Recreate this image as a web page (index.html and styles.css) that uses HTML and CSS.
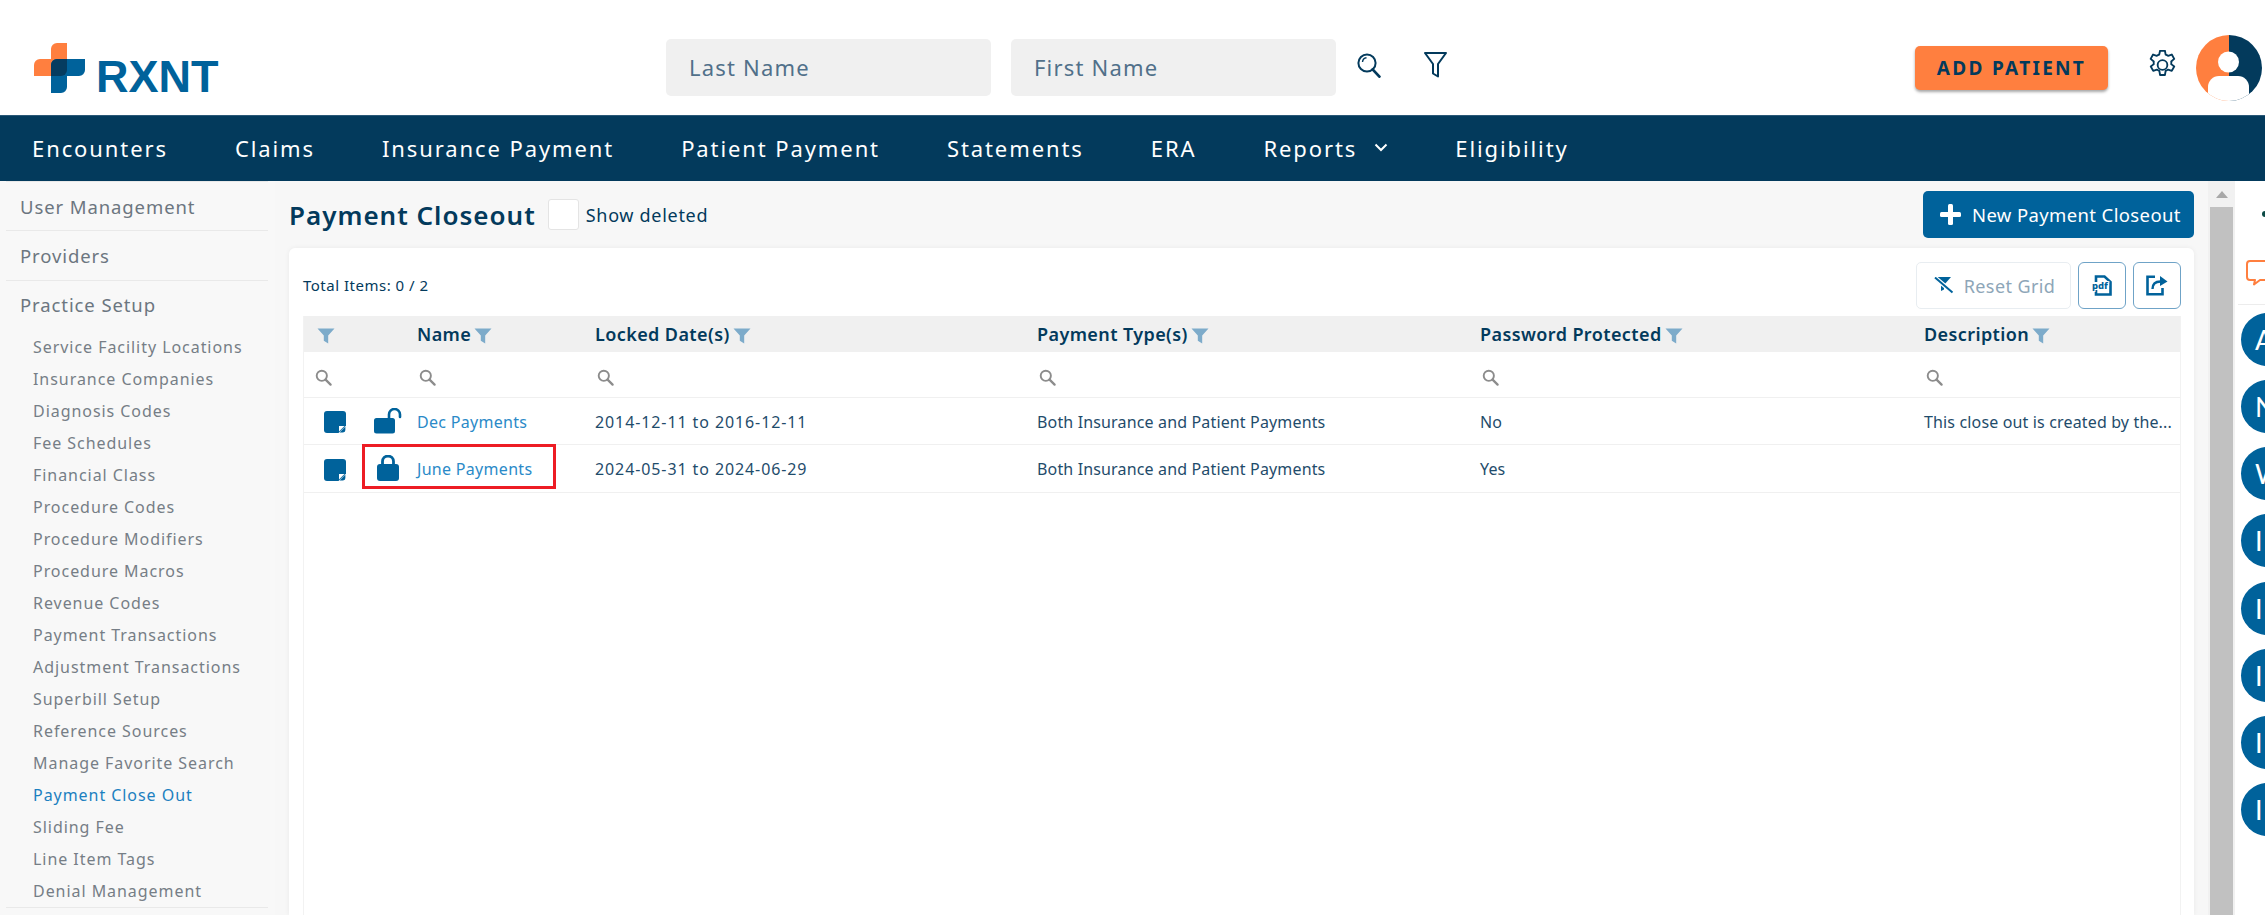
FILE: index.html
```html
<!DOCTYPE html>
<html lang="en">
<head>
<meta charset="utf-8">
<title>Payment Closeout</title>
<link rel="stylesheet" href="styles.css">
</head>
<body>
<svg class="defs" width="0" height="0" aria-hidden="true">
  <symbol id="funnel" viewBox="0 0 18 16"><path d="M0.5 0.5h17L11.2 7.6V15.5L6.8 12.8V7.6z"/></symbol>
  <symbol id="mag" viewBox="0 0 18 18"><circle cx="7.2" cy="7.2" r="5.4" fill="none" stroke="currentColor" stroke-width="2"/><path d="M11.2 11.2L16.5 16.5" stroke="currentColor" stroke-width="2.4" stroke-linecap="round"/></symbol>
  <symbol id="note" viewBox="0 0 22 22"><path d="M3 0h16a3 3 0 0 1 3 3v11.5L14.5 22H3a3 3 0 0 1-3-3V3a3 3 0 0 1 3-3z"/><path d="M15 20.5V15h5.5z" fill="#fff" stroke="none"/><path d="M15.6 21.4l5.8-5.8v3.4a2.4 2.4 0 0 1-2.4 2.4z"/></symbol>
</svg>
<header class="topbar">
  <a class="logo">
    <svg class="logo-mark" width="51" height="50" viewBox="0 0 51 50">
      <path d="M17 16V6a6 6 0 0 1 6-6H33V33H0V22a6 6 0 0 1 6-6z" fill="#ff7f3f"/>
      <path d="M23 16H51V27a6 6 0 0 1-6 6H33V44a6 6 0 0 1-6 6H17V22a6 6 0 0 1 6-6z" fill="#00629b"/>
      <path d="M23 16H33V27a6 6 0 0 1-6 6H17V22a6 6 0 0 1 6-6z" fill="#053c60"/>
    </svg>
    <span class="logo-text">RXNT</span>
  </a>
  <div class="search">
    <div class="field">Last Name</div>
    <div class="field">First Name</div>
    <svg class="search-ico" width="24" height="25" viewBox="0 0 24 25" fill="none" stroke="#033a5c"><circle cx="10" cy="10" r="8.6" stroke-width="2"/><path d="M5.5 9a4.6 4.6 0 0 1 4-4.2" stroke-width="1.4"/><path d="M15.6 16.4L22.4 23.6" stroke-width="2.8" stroke-linecap="round"/></svg>
    <svg class="filter-ico" width="23" height="26" viewBox="0 0 23 26" fill="none" stroke="#033a5c" stroke-width="2" stroke-linejoin="round"><path d="M1 1h21l-8 11v12.5l-5-3V12z"/></svg>
  </div>
  <button class="add-btn">ADD PATIENT</button>
  <svg class="gear" width="27" height="30" viewBox="3 1.5 18 21" fill="none" stroke="#033a5c" stroke-width="1.3" stroke-linejoin="round"><circle cx="12" cy="12" r="3.4"/><path d="M10.3 2h3.4l.5 2.7c.6.2 1.2.5 1.7.9l2.6-.9 1.7 3-2.1 1.8c.1.6.1 1.2 0 1.9l2.1 1.7-1.7 3-2.6-.9c-.5.4-1.1.7-1.7.9l-.5 2.9h-3.4l-.5-2.9c-.6-.2-1.2-.5-1.7-.9l-2.6.9-1.7-3 2.1-1.7c-.1-.7-.1-1.3 0-1.9L3.7 7.7l1.7-3 2.6.9c.5-.4 1.1-.7 1.7-.9z"/></svg>
  <svg class="avatar" width="66" height="66" viewBox="0 0 66 66">
    <defs><clipPath id="av"><circle cx="33" cy="33" r="33"/></clipPath></defs>
    <g clip-path="url(#av)">
      <rect width="33" height="66" fill="#ff7f3f"/>
      <rect x="33" width="33" height="66" fill="#033a5c"/>
      <circle cx="32.500" cy="27" r="10.500" fill="#fff"/>
      <path d="M12 66V52a11 11 0 0 1 11-11h19a11 11 0 0 1 11 11v14z" fill="#fff"/>
    </g>
  </svg>
</header>
<nav class="navbar">
  <a>Encounters</a><a>Claims</a><a>Insurance Payment</a><a>Patient Payment</a><a>Statements</a><a>ERA</a>
  <a class="has-caret">Reports<svg width="14" height="9" viewBox="0 0 14 9" fill="none" stroke="#fff" stroke-width="2"><path d="M1.5 1.5L7 7l5.5-5.5"/></svg></a>
  <a>Eligibility</a>
</nav>
<div class="body">
  <aside class="sidebar">
    <div class="side-head">User Management</div>
    <div class="side-head">Providers</div>
    <div class="side-group">
      <div class="side-title">Practice Setup</div>
      <a>Service Facility Locations</a>
      <a>Insurance Companies</a>
      <a>Diagnosis Codes</a>
      <a>Fee Schedules</a>
      <a>Financial Class</a>
      <a>Procedure Codes</a>
      <a>Procedure Modifiers</a>
      <a>Procedure Macros</a>
      <a>Revenue Codes</a>
      <a>Payment Transactions</a>
      <a>Adjustment Transactions</a>
      <a>Superbill Setup</a>
      <a>Reference Sources</a>
      <a>Manage Favorite Search</a>
      <a class="active">Payment Close Out</a>
      <a>Sliding Fee</a>
      <a>Line Item Tags</a>
      <a>Denial Management</a>
    </div>
  </aside>
  <main class="main">
    <div class="title-row">
      <h1>Payment Closeout</h1>
      <span class="check"></span>
      <span class="check-label">Show deleted</span>
      <button class="new-btn"><svg width="21" height="21" viewBox="0 0 21 21" fill="#fff"><rect x="8" y="0" width="5" height="21" rx="1.5"/><rect x="0" y="8" width="21" height="5" rx="1.5"/></svg>New Payment Closeout</button>
    </div>
    <section class="card">
      <div class="tools">
        <span class="total">Total Items: 0 / 2</span>
        <button class="reset"><svg width="22" height="17" viewBox="0 0 22 17"><path d="M0 0H19L12 8V12.500L9 14V8Z" fill="#00629b"/><path d="M1 -1L23 17.500" stroke="#fff" stroke-width="4.500" fill="none"/><path d="M3 0.500L20.500 15.500" stroke="#00629b" stroke-width="2" fill="none"/></svg>Reset Grid</button>
        <button class="icon-btn"><svg width="20" height="21" viewBox="0 0 20 21"><path d="M4 7V1.500H12.500L18.500 7V19.500H4V15" fill="none" stroke="#00629b" stroke-width="2.600"/><text x="0" y="13.500" class="pdf-text">pdf</text></svg></button>
        <button class="icon-btn"><svg width="22" height="21" viewBox="0 0 22 21" fill="none" stroke="#00629b" stroke-width="2.600"><path d="M9 1.800H1.500V19.200H16.500V13"/><path d="M6.500 14c0-5 2.500-7.500 8-7.500" stroke-width="2.400"/><path d="M14 1l7.500 5.500L14 11z" fill="#00629b" stroke="none"/></svg></button>
      </div>
      <div class="grid-wrap">
        <table class="grid">
          <thead>
            <tr class="head-row">
              <th class="c-a"><svg class="fn"><use href="#funnel"/></svg></th>
              <th class="c-b"></th>
              <th class="c-name">Name<svg class="fn"><use href="#funnel"/></svg></th>
              <th class="c-date">Locked Date(s)<svg class="fn"><use href="#funnel"/></svg></th>
              <th class="c-type">Payment Type(s)<svg class="fn"><use href="#funnel"/></svg></th>
              <th class="c-pw">Password Protected<svg class="fn"><use href="#funnel"/></svg></th>
              <th class="c-desc">Description<svg class="fn"><use href="#funnel"/></svg></th>
            </tr>
            <tr class="filter-row">
              <td><svg class="mg"><use href="#mag"/></svg></td>
              <td></td>
              <td><svg class="mg"><use href="#mag"/></svg></td>
              <td><svg class="mg"><use href="#mag"/></svg></td>
              <td><svg class="mg"><use href="#mag"/></svg></td>
              <td><svg class="mg"><use href="#mag"/></svg></td>
              <td><svg class="mg"><use href="#mag"/></svg></td>
            </tr>
          </thead>
          <tbody>
            <tr class="row">
              <td class="ic-a"><svg class="nt"><use href="#note"/></svg></td>
              <td class="ic-b"><svg width="29" height="26" viewBox="0 0 29 26"><path d="M2.500 10h16a2.500 2.500 0 0 1 2.500 2.500V23a2.500 2.500 0 0 1-2.500 2.500h-16A2.500 2.500 0 0 1 0 23V12.500A2.500 2.500 0 0 1 2.500 10z" fill="#00629b"/><path d="M15 11V6.500a5.500 5.500 0 0 1 11 0V9" fill="none" stroke="#00629b" stroke-width="2.600" stroke-linecap="round"/></svg></td>
              <td><a class="lnk">Dec Payments</a></td>
              <td class="date">2014-12-11 to 2016-12-11</td>
              <td>Both Insurance and Patient Payments</td>
              <td>No</td>
              <td class="desc">This close out is created by the...</td>
            </tr>
            <tr class="row">
              <td class="ic-a"><svg class="nt"><use href="#note"/></svg></td>
              <td class="ic-b"><svg class="lock" width="22" height="26" viewBox="0 0 22 26"><rect y="9" width="22" height="17" rx="3" fill="#00629b"/><path d="M5.500 11V6.500a5.500 5.500 0 0 1 11 0V11" fill="none" stroke="#00629b" stroke-width="2.800"/></svg></td>
              <td><a class="lnk">June Payments</a></td>
              <td class="date">2024-05-31 to 2024-06-29</td>
              <td>Both Insurance and Patient Payments</td>
              <td>Yes</td>
              <td></td>
            </tr>
          </tbody>
        </table>
        <div class="mark"></div>
      </div>
    </section>
  </main>
  <div class="scrollbar"><span class="arrow"></span><span class="thumb"></span></div>
  <aside class="rail">
    <div class="rail-top"><span class="rail-dot"></span></div>
    <svg class="chat" width="30" height="28" viewBox="0 0 30 28" fill="none" stroke="#ff7f3f" stroke-width="2"><path d="M4 1h26v19H14l-6 4.500 1-4.500H4a3 3 0 0 1-3-3V4a3 3 0 0 1 3-3z" stroke-linejoin="round"/></svg>
    <div class="rail-rule"></div>
    <div class="bubbles">
      <span>A</span><span>N</span><span>W</span><span>I</span><span>I</span><span>I</span><span>I</span><span>I</span>
    </div>
  </aside>
</div>
</body>
</html>
```
FILE: styles.css
```css
* { box-sizing: border-box; }
html, body { margin: 0; height: 915px; overflow: hidden; }
body { font-family: "Noto Sans", "Lato", sans-serif; color: #033a5c; background: #fff; display: flex; flex-direction: column; }
.defs { display: block; height: 0; }
button { font-family: inherit; border: 0; cursor: pointer; }

.topbar { height: 115px; flex: none; display: flex; align-items: center; padding-top: 20px; }
.logo { display: flex; align-items: flex-end; margin-left: 34px; width: 632px; height: 50px; }
.logo-mark { flex: none; }
.logo-text { font-family: "Liberation Sans", sans-serif; font-weight: 700; font-size: 45px; line-height: 33px; color: #00629b; margin-left: 11px; }
.search { display: flex; align-items: center; gap: 20px; }
.field { width: 325px; height: 57px; background: #f0f0f0; border-radius: 5px; padding-left: 23px; font-size: 22px; line-height: 57px; letter-spacing: 1.200px; color: #51708a; }
.search-ico { margin-top: -5px; margin-left: 1px; }
.filter-ico { margin-left: 23px; margin-top: -5px; }
.add-btn { margin-left: auto; width: 193px; height: 44px; background: #ff7f3f; color: #033a5c; font-weight: 700; font-size: 19px; letter-spacing: 2.300px; border-radius: 5px; box-shadow: 0 2px 3px rgba(0,0,0,.35); padding: 0; }
.gear { margin-left: 41px; margin-top: -5px; }
.avatar { margin-left: 20px; margin-right: 3px; }

.navbar { height: 66px; flex: none; background: #033a5c; display: flex; align-items: center; gap: 67px; padding: 0 0 2px 32px; border-top: 1px solid #2a5877; }
.navbar a { color: #fff; font-size: 22px; letter-spacing: 1.900px; }
.has-caret { display: flex; align-items: center; gap: 17px; }

.body { flex: 1; min-height: 0; display: flex; background: #f7f7f7; }
.sidebar { width: 275px; flex: none; padding: 0 7px 0 6px; background: #f8f8f8; }
.side-head, .side-title { font-size: 18.500px; letter-spacing: .9px; color: #6c7680; padding-left: 14px; }
.side-head { height: 50px; line-height: 50px; border-bottom: 1px solid #e9e9e9; }
.side-head:first-child { border-top: 1px solid #e9e9e9; }
.side-group { border-bottom: 1px solid #e9e9e9; height: 627px; }
.side-title { height: 50px; line-height: 48px; }
.side-group a { display: block; height: 32px; line-height: 32px; padding-left: 27px; font-size: 16px; letter-spacing: .95px; color: #767e86; }
.side-group a.active { color: #1c80c0; }

.main { flex: 1; min-width: 0; padding: 10px 14px 0; display: flex; flex-direction: column; }
.title-row { display: flex; align-items: center; height: 47px; flex: none; }
h1 { margin: 0; font-size: 26px; font-weight: 600; letter-spacing: 1px; color: #033a5c; }
.check { width: 31px; height: 31px; background: #fff; border: 1px solid #e4e4e4; border-radius: 3px; margin-left: 12px; }
.check-label { font-size: 18px; letter-spacing: .7px; margin-left: 7px; }
.new-btn { margin-left: auto; width: 271px; height: 47px; background: #00629b; color: #fff; border-radius: 5px; font-size: 18.500px; letter-spacing: .37px; display: flex; align-items: center; gap: 11px; padding-left: 17px; }

.card { flex: 1; margin-top: 10px; background: #fff; border-radius: 6px 6px 0 0; box-shadow: 0 0 5px rgba(0,0,0,.06); padding: 14px 13px 0 14px; display: flex; flex-direction: column; min-width: 0; }
.tools { display: flex; align-items: center; height: 47px; gap: 7px; flex: none; }
.total { font-size: 15px; letter-spacing: .5px; margin-right: auto; margin-top: -1px; }
.reset { width: 155px; height: 47px; background: #fff; border: 1px solid #e8edf1; border-radius: 5px; color: #8ea6b8; font-size: 18px; letter-spacing: .4px; display: flex; align-items: center; justify-content: center; gap: 10px; padding: 0; }
.icon-btn { width: 48px; height: 47px; background: #fff; border: 1.500px solid #6fa3c7; border-radius: 6px; display: flex; align-items: center; justify-content: center; padding: 0; }
.pdf-text { font-size: 9.500px; font-weight: 800; fill: #00629b; font-family: "Noto Sans", sans-serif; stroke: #fff; stroke-width: 2px; paint-order: stroke; }

.grid-wrap { flex: 1; margin-top: 7px; position: relative; border-right: 1px solid #f2f2f2; border-left: 1px solid #f2f2f2; }
.grid { width: 100%; border-collapse: collapse; table-layout: fixed; }
.c-a, .c-b { width: 52px; }
.c-name { width: 178px; }
.c-date { width: 442px; }
.c-type { width: 443px; }
.c-pw { width: 444px; }
.c-desc { width: auto; }
th { text-align: left; padding: 0 0 0 9px; font-size: 18px; font-weight: 600; letter-spacing: .4px; color: #033a5c; white-space: nowrap; }
.head-row { height: 36px; background: #f0f0f0; }
th.c-a { padding-left: 13px; }
.fn { width: 18px; height: 16px; fill: #7dabca; margin-left: 3px; vertical-align: -3px; }
.c-a .fn { margin-left: 0; }
.filter-row { height: 45px; border-bottom: 1px solid #f0f0f0; }
.filter-row td { padding: 3px 0 0 11px; }
.mg { width: 17px; height: 17px; color: #8c8c8c; vertical-align: middle; }
.row { height: 47.500px; border-bottom: 1px solid #f0f0f0; }
.row td { padding: 2px 10px 0 9px; font-size: 16px; letter-spacing: .15px; color: #1f4c6b; white-space: nowrap; }
.row .ic-a { padding: 3px 0 0 20px; }
.row .ic-b { padding: 0 0 0 18px; }
.ic-a svg, .ic-b svg { display: block; }
.nt { width: 22px; height: 22px; fill: #00629b; }
.row .ic-b .lock { margin-left: 3px; }
.lnk { color: #2a8ac8; letter-spacing: .3px; }
.row .date { letter-spacing: .9px; }
.row .desc { letter-spacing: .15px; }
.mark { position: absolute; left: 58px; top: 128px; width: 194px; height: 45px; border: 3px solid #ed1c24; pointer-events: none; }

.scrollbar { width: 27px; flex: none; background: #f1f1f1; display: flex; flex-direction: column; align-items: center; padding: 0 2px; }
.arrow { width: 0; height: 0; border: 6px solid transparent; border-top: 0; border-bottom: 7px solid #a8a8a8; margin: 10px 0 9px; }
.thumb { flex: 1; width: 23px; background: #c1c1c1; }

.rail { width: 30px; flex: none; background: #fff; overflow: hidden; }
.rail-top { height: 32px; padding-top: 30px; }
.rail-dot { display: block; width: 6px; height: 6px; margin-left: 27px; background: #0b4a45; border-radius: 50%; }
.chat { display: block; margin: 47px 0 0 11px; }
.rail-rule { height: 1px; background: #ececec; margin: 16px 0 0 3px; }
.bubbles { display: flex; flex-direction: column; gap: 14.150px; margin: 8px 0 0 6px; }
.bubbles span { width: 53px; height: 53px; flex: none; border-radius: 50%; background: #00629b; color: #fff; font-family: "Lato", sans-serif; font-size: 27px; line-height: 53px; padding-left: 14px; }
```
